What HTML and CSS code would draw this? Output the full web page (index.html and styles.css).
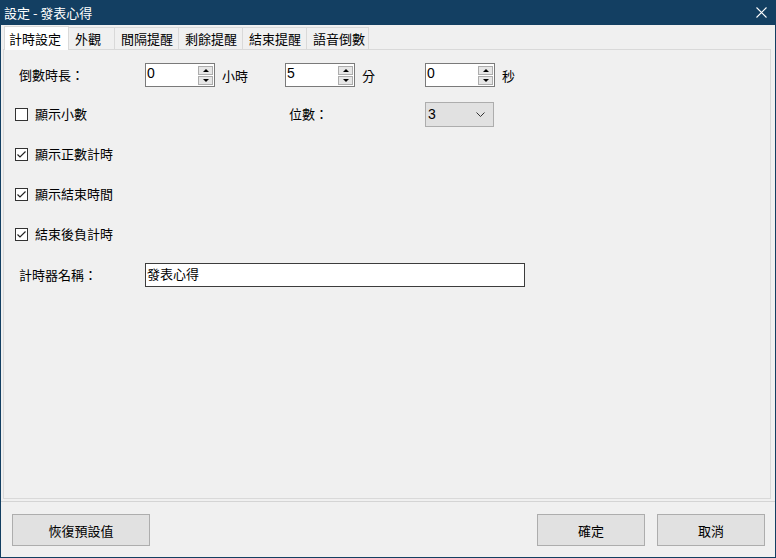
FILE: index.html
```html
<!DOCTYPE html>
<html>
<head>
  <meta charset="UTF-8">
  <title>設定 - 發表心得</title>
  <link rel="stylesheet" href="styles.css">
</head>
<body>
  <div class="window">
    <div class="titlebar">
      <span class="title">設定 - 發表心得</span>
      <svg class="close" width="11" height="11" viewBox="0 0 11 11">
        <path d="M0.5 0.5 L10.5 10.5 M10.5 0.5 L0.5 10.5" stroke="#fff" stroke-width="1.1" fill="none"/>
      </svg>
    </div>

    <div class="tabs">
      <div class="tab active t1">計時設定</div>
      <div class="tab t2">外觀</div>
      <div class="tab t3">間隔提醒</div>
      <div class="tab t3">剩餘提醒</div>
      <div class="tab t3">結束提醒</div>
      <div class="tab t4">語音倒數</div>
    </div>

    <div class="panel">
      <div class="row first">
        <div class="label">倒數時長：</div>
        <div class="spin"><span class="val">0</span><div class="arrows"><span class="up"></span><span class="down"></span></div></div>
        <div class="unit">小時</div>
        <div class="spin"><span class="val">5</span><div class="arrows"><span class="up"></span><span class="down"></span></div></div>
        <div class="unit">分</div>
        <div class="spin"><span class="val">0</span><div class="arrows"><span class="up"></span><span class="down"></span></div></div>
        <div class="unit">秒</div>
      </div>

      <div class="row check-row">
        <div class="check wide"><span class="box"></span>顯示小數</div>
        <div class="digits-label">位數：</div>
        <div class="select">
          <span class="val">3</span>
          <svg width="9" height="5" viewBox="0 0 9 5"><polyline points="0.5,0.5 4.5,4.5 8.5,0.5" stroke="#333" stroke-width="1" fill="none"/></svg>
        </div>
      </div>

      <div class="row check-row">
        <div class="check"><span class="box"><svg width="11" height="11" viewBox="0 0 11 11"><polyline points="1.5,5.5 4,8 9.5,2.5" stroke="#222" stroke-width="1.2" fill="none"/></svg></span>顯示正數計時</div>
      </div>
      <div class="row check-row">
        <div class="check"><span class="box"><svg width="11" height="11" viewBox="0 0 11 11"><polyline points="1.5,5.5 4,8 9.5,2.5" stroke="#222" stroke-width="1.2" fill="none"/></svg></span>顯示結束時間</div>
      </div>
      <div class="row check-row">
        <div class="check"><span class="box"><svg width="11" height="11" viewBox="0 0 11 11"><polyline points="1.5,5.5 4,8 9.5,2.5" stroke="#222" stroke-width="1.2" fill="none"/></svg></span>結束後負計時</div>
      </div>

      <div class="row name-row">
        <div class="label">計時器名稱：</div>
        <div class="textbox">發表心得</div>
      </div>
    </div>

    <div class="separator"></div>

    <div class="footer">
      <button class="btn reset">恢復預設值</button>
      <div class="right">
        <button class="btn">確定</button>
        <button class="btn">取消</button>
      </div>
    </div>
  </div>
</body>
</html>
```

FILE: styles.css
```css
* { box-sizing: border-box; }
body { margin: 0; background: #f0f0f0; font-family: "Noto Sans CJK TC", "Liberation Sans", sans-serif; font-size: 13px; color: #000; }

.window { width: 776px; height: 558px; border: 1px solid #133f62; border-top: none; background: #f0f0f0; display: flex; flex-direction: column; }

.titlebar { height: 25px; background: #133f62; color: #fff; display: flex; align-items: center; justify-content: space-between; padding: 0 8px 0 3px; flex-shrink: 0; }
.title { font-size: 13px; line-height: 16px; }

.tabs { display: flex; align-items: flex-end; height: 24px; margin-top: 1px; padding-left: 3px; }
.tab { height: 23px; border: 1px solid #d9d9d9; border-bottom: none; background: #f0f0f0; margin-left: -1px; padding-left: 6px; line-height: 21px; white-space: nowrap; }
.tab:first-child { margin-left: 0; }
.tab.active { height: 24px; background: #fff; position: relative; z-index: 1; padding-left: 4px; line-height: 23px; }
.t1 { width: 65px; }
.t2 { width: 47px; }
.t3 { width: 65px; }
.t4 { width: 63px; }

.panel { margin: -1px 4px 0 2px; height: 450px; border: 1px solid #d9d9d9; background: #f0f0f0; padding-top: 13px; }

.row { display: flex; align-items: center; }
.row.first { height: 24px; }
.label { width: 141px; padding-left: 15px; line-height: 16px; }
.unit { width: 70px; padding-left: 7px; }

.spin { width: 70px; height: 24px; background: #fff; border: 1px solid #7a7a7a; display: flex; justify-content: space-between; align-items: center; padding: 0 1px 0 1px; }
.spin .val { font-family: "Liberation Sans", sans-serif; font-size: 14px; line-height: 16px; margin-top: -4px; }
.arrows { display: flex; flex-direction: column; gap: 1px; margin-top: 1px; }
.arrows span { width: 15px; height: 9px; background: #e6e6e6; border: 1px solid #adadad; display: flex; align-items: center; justify-content: center; }
.arrows .up::after { content: ""; border-left: 3px solid transparent; border-right: 3px solid transparent; border-bottom: 3px solid #000; }
.arrows .down::after { content: ""; border-left: 3px solid transparent; border-right: 3px solid transparent; border-top: 3px solid #000; }

.check-row { height: 40px; }
.row.check-row:nth-child(2) { margin-top: 7px; }
.check { display: flex; align-items: center; padding-left: 11px; line-height: 16px; }
.check.wide { width: 283px; }
.box { width: 13px; height: 13px; border: 1px solid #333; background: #fff; margin-right: 7px; display: flex; align-items: center; justify-content: center; }
.digits-label { width: 138px; padding-left: 2px; line-height: 16px; }
.select { width: 69px; height: 25px; background: #e1e1e1; border: 1px solid #adadad; display: flex; align-items: center; justify-content: space-between; padding: 0 8px 0 2px; }
.select .val { font-family: "Liberation Sans", sans-serif; font-size: 14px; line-height: 16px; }

.name-row { margin-top: 9px; height: 24px; }
.textbox { width: 380px; height: 24px; background: #fff; border: 1px solid #3c3c3c; padding-left: 1px; line-height: 20px; }

.separator { height: 1px; background: #d4d4d4; margin-top: 2px; }

.footer { display: flex; justify-content: space-between; padding: 12px 10px 0 11px; }
.right { display: flex; gap: 12px; }
.btn { height: 32px; width: 108px; background: #e1e1e1; border: 1px solid #adadad; font-family: "Noto Sans CJK TC", sans-serif; font-size: 13px; color: #000; padding: 0; }
.btn.reset { width: 138px; }
```
